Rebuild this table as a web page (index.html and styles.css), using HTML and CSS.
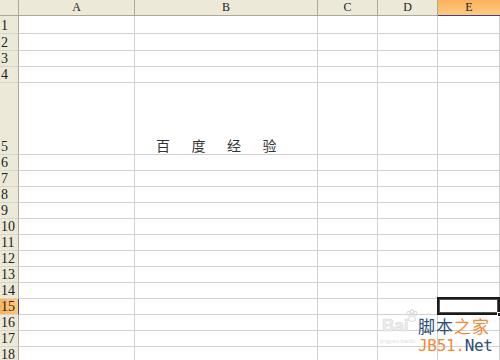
FILE: index.html
```html
<!DOCTYPE html>
<html>
<head>
<meta charset="utf-8">
<link rel="stylesheet" href="styles.css">
</head>
<body>
<div class="sheet">
  <div class="grid">
    <div class="corner"></div>
    <div class="ch">A</div><div class="ch">B</div><div class="ch">C</div><div class="ch">D</div><div class="ch sel">E</div>

    <div class="rh r1">1</div><div class="c"></div><div class="c"></div><div class="c"></div><div class="c"></div><div class="c"></div>
    <div class="rh r2">2</div><div class="c"></div><div class="c"></div><div class="c"></div><div class="c"></div><div class="c"></div>
    <div class="rh">3</div><div class="c"></div><div class="c"></div><div class="c"></div><div class="c"></div><div class="c"></div>
    <div class="rh">4</div><div class="c"></div><div class="c"></div><div class="c"></div><div class="c"></div><div class="c"></div>
    <div class="rh r5">5</div><div class="c"></div><div class="c title">百度经验</div><div class="c"></div><div class="c"></div><div class="c"></div>
    <div class="rh">6</div><div class="c"></div><div class="c"></div><div class="c"></div><div class="c"></div><div class="c"></div>
    <div class="rh">7</div><div class="c"></div><div class="c"></div><div class="c"></div><div class="c"></div><div class="c"></div>
    <div class="rh">8</div><div class="c"></div><div class="c"></div><div class="c"></div><div class="c"></div><div class="c"></div>
    <div class="rh">9</div><div class="c"></div><div class="c"></div><div class="c"></div><div class="c"></div><div class="c"></div>
    <div class="rh">10</div><div class="c"></div><div class="c"></div><div class="c"></div><div class="c"></div><div class="c"></div>
    <div class="rh">11</div><div class="c"></div><div class="c"></div><div class="c"></div><div class="c"></div><div class="c"></div>
    <div class="rh">12</div><div class="c"></div><div class="c"></div><div class="c"></div><div class="c"></div><div class="c"></div>
    <div class="rh">13</div><div class="c"></div><div class="c"></div><div class="c"></div><div class="c"></div><div class="c"></div>
    <div class="rh">14</div><div class="c"></div><div class="c"></div><div class="c"></div><div class="c"></div><div class="c"></div>
    <div class="rh sel">15</div><div class="c"></div><div class="c"></div><div class="c"></div><div class="c"></div><div class="c active"></div>
    <div class="rh">16</div><div class="c"></div><div class="c"></div><div class="c"></div><div class="c"></div><div class="c"></div>
    <div class="rh">17</div><div class="c"></div><div class="c"></div><div class="c"></div><div class="c"></div><div class="c"></div>
    <div class="rh">18</div><div class="c"></div><div class="c"></div><div class="c"></div><div class="c"></div><div class="c"></div>
  </div>

  <div class="watermark">
    <div class="baidu">
      <span class="bai">Bai</span>
      <svg class="paw" width="14" height="14" viewBox="0 0 16 16">
        <ellipse cx="4" cy="5" rx="1.8" ry="2.3" fill="none" stroke="#dcdcdc" stroke-width="1.2"/>
        <ellipse cx="8" cy="3" rx="1.8" ry="2.3" fill="none" stroke="#dcdcdc" stroke-width="1.2"/>
        <ellipse cx="12" cy="5" rx="1.8" ry="2.3" fill="none" stroke="#dcdcdc" stroke-width="1.2"/>
        <path d="M4 13 C4 9 6 8 8 8 C10 8 12 9 12 13 C10 14.5 6 14.5 4 13 Z" fill="none" stroke="#dcdcdc" stroke-width="1.2"/>
      </svg>
      <span class="jy">jingyan.baidu</span>
    </div>
    <div class="jb">
      <div class="cn"><span class="blue">脚本</span><span class="orange">之家</span></div>
      <div class="en"><span class="orange">JB51.</span><span class="blue">Net</span></div>
    </div>
  </div>
</div>
</body>
</html>
```

FILE: styles.css
```css
html, body {
  margin: 0;
  padding: 0;
  background: #ffffff;
  overflow: hidden;
}

.sheet {
  position: relative;
  width: 500px;
  height: 360px;
  overflow: hidden;
}

.grid {
  display: grid;
  grid-template-columns: 19px 116px 183px 60px 60px 62px;
  grid-template-rows: 16px 18px 17px 16px 16px 72px repeat(13, 16px);
}

.grid > div {
  box-sizing: border-box;
}

.corner {
  background: #ece9d8;
  border-right: 1px solid #aca899;
  border-bottom: 1px solid #aca899;
}

.ch {
  background: #ece9d8;
  border-right: 1px solid #aca899;
  border-bottom: 1px solid #aca899;
  font-family: "Liberation Serif", serif;
  font-size: 12px;
  line-height: 15px;
  color: #222;
  text-align: center;
}

.ch.sel {
  background: linear-gradient(#f8b35e, #ffc97c);
  border-bottom: 1px solid #3c3c9c;
  border-right: none;
}

.rh {
  background: #ece9d8;
  border-right: 1px solid #aca899;
  border-bottom: 1px solid #d9d5c5;
  font-family: "Liberation Serif", serif;
  font-size: 14px;
  color: #222;
  padding-left: 1px;
  display: flex;
  align-items: flex-end;
  line-height: 14px;
}

.rh.sel {
  background: linear-gradient(90deg, #f8b35e, #ffc97c);
  border-right: 1px solid #3c3c9c;
}

.c {
  border-right: 1px solid #d0d0d0;
  border-bottom: 1px solid #d0d0d0;
  background: #fff;
}

.title {
  display: flex;
  align-items: flex-end;
  justify-content: center;
  font-family: "Noto Sans CJK SC", sans-serif;
  font-size: 14px;
  line-height: 16px;
  letter-spacing: 21.5px;
  color: #333;
  padding-bottom: 1px;
  padding-left: 2px;
}

.active {
  position: relative;
  border-right: none;
}

.active::before {
  content: "";
  position: absolute;
  left: -1px;
  top: -2px;
  right: 0;
  bottom: -1px;
  border: 2px solid #1a1a1a;
  box-shadow: inset 0 0 0 1px #555;
}

.active::after {
  content: "";
  position: absolute;
  right: -2px;
  bottom: -3px;
  width: 3px;
  height: 3px;
  background: #1a1a1a;
  border: 1px solid #fff;
}

.watermark {
  position: absolute;
  left: 378px;
  top: 308px;
  display: flex;
  align-items: flex-start;
}

.baidu {
  position: relative;
  width: 40px;
  height: 44px;
}

.bai {
  position: absolute;
  left: 4px;
  top: 8px;
  font-family: "Liberation Sans", sans-serif;
  font-weight: bold;
  font-size: 17px;
  color: #eeeeee;
  -webkit-text-stroke: 0.6px #d8d8d8;
}

.paw {
  position: absolute;
  left: 27px;
  top: 1px;
}

.jy {
  position: absolute;
  left: 2px;
  top: 30px;
  font-family: "Liberation Sans", sans-serif;
  font-size: 6px;
  color: #e0e0e0;
  white-space: nowrap;
}

.jb {
  display: flex;
  flex-direction: column;
}

.cn {
  font-family: "Noto Sans CJK SC", sans-serif;
  font-size: 17px;
  line-height: 25px;
  margin-top: 5px;
  letter-spacing: 1px;
}

.en {
  font-family: "DejaVu Sans Mono", monospace;
  font-size: 16px;
  line-height: 19px;
  margin-top: -2px;
  letter-spacing: -0.3px;
}

.blue {
  color: #2b4f78;
}

.orange {
  color: #f28a3a;
}
```
